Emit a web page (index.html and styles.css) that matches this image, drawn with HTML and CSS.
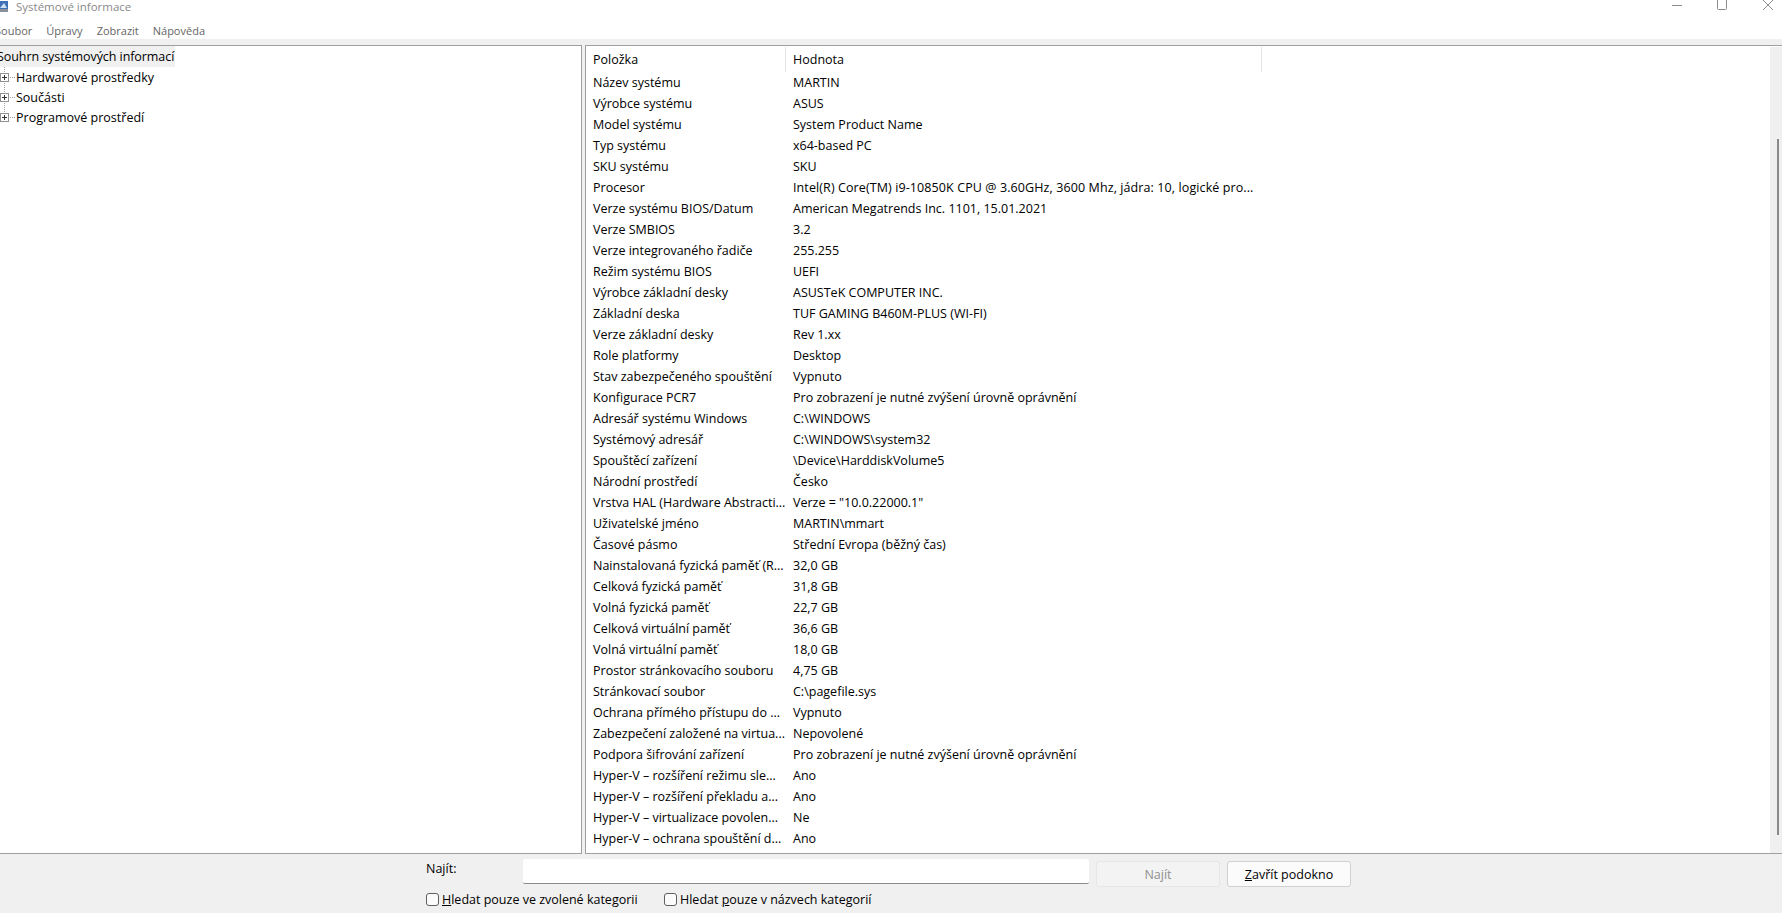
FILE: index.html
```html
<!DOCTYPE html>
<html lang="cs">
<head>
<meta charset="utf-8">
<title>Systémové informace</title>
<link rel="stylesheet" href="styles.css">
</head>
<body>

<!-- Title bar -->
<div class="titlebar">
  <svg class="appicon" width="10" height="12" viewBox="0 0 10 12">
    <rect x="0" y="0" width="9" height="8" fill="#3f6fb5"/>
    <path d="M1 7 L5 2 L8 7 Z" fill="#cfe0f5"/>
    <rect x="0" y="8" width="9" height="3" fill="#8a8f99"/>
  </svg>
  <span class="apptitle">Systémové informace</span>
  <div class="wincontrols">
    <svg class="wc-min" width="10" height="10" viewBox="0 0 10 10"><path d="M0 5.5 H10" stroke="#8c8c8c" fill="none"/></svg>
    <svg class="wc-max" width="10" height="10" viewBox="0 0 10 10"><path d="M1.5 -2 H8.5 Q9.5 -2 9.5 -1 V8.5 Q9.5 9.5 8.5 9.5 H1.5 Q0.5 9.5 0.5 8.5 V-1 Q0.5 -2 1.5 -2 Z" stroke="#8c8c8c" fill="none"/></svg>
    <svg class="wc-close" width="10" height="10" viewBox="0 0 10 10"><path d="M0 0 L10 10 M10 0 L0 10" stroke="#8c8c8c" fill="none"/></svg>
  </div>
</div>

<!-- Menu -->
<div class="menubar">
  <span class="menu-first">Soubor</span>
  <span>Úpravy</span>
  <span>Zobrazit</span>
  <span>Nápověda</span>
</div>

<div class="strip"></div>

<!-- Tree and list -->
<div class="panes">
  <div class="tree">
    <div class="tree-sel">Souhrn systémových informací</div>
    <div class="tree-rows">
      <div class="tree-row"><span class="plus"></span><span class="dots"></span>Hardwarové prostředky</div>
      <div class="tree-row"><span class="plus"></span><span class="dots"></span>Součásti</div>
      <div class="tree-row"><span class="plus"></span><span class="dots"></span>Programové prostředí</div>
    </div>
  </div>

  <div class="list">
    <div class="list-main">
      <div class="list-head">
        <div class="hcell hcell1">Položka</div>
        <div class="hcell hcell2">Hodnota</div>
      </div>
      <div class="row"><span>Název systému</span><span>MARTIN</span></div>
      <div class="row"><span>Výrobce systému</span><span>ASUS</span></div>
      <div class="row"><span>Model systému</span><span>System Product Name</span></div>
      <div class="row"><span>Typ systému</span><span>x64-based PC</span></div>
      <div class="row"><span>SKU systému</span><span>SKU</span></div>
      <div class="row"><span>Procesor</span><span class="val-long">Intel(R) Core(TM) i9-10850K CPU @ 3.60GHz, 3600 Mhz, jádra: 10, logické pro...</span></div>
      <div class="row"><span>Verze systému BIOS/Datum</span><span>American Megatrends Inc. 1101, 15.01.2021</span></div>
      <div class="row"><span>Verze SMBIOS</span><span>3.2</span></div>
      <div class="row"><span>Verze integrovaného řadiče</span><span>255.255</span></div>
      <div class="row"><span>Režim systému BIOS</span><span>UEFI</span></div>
      <div class="row"><span>Výrobce základní desky</span><span>ASUSTeK COMPUTER INC.</span></div>
      <div class="row"><span>Základní deska</span><span>TUF GAMING B460M-PLUS (WI-FI)</span></div>
      <div class="row"><span>Verze základní desky</span><span>Rev 1.xx</span></div>
      <div class="row"><span>Role platformy</span><span>Desktop</span></div>
      <div class="row"><span>Stav zabezpečeného spouštění</span><span>Vypnuto</span></div>
      <div class="row"><span>Konfigurace PCR7</span><span>Pro zobrazení je nutné zvýšení úrovně oprávnění</span></div>
      <div class="row"><span>Adresář systému Windows</span><span>C:\WINDOWS</span></div>
      <div class="row"><span>Systémový adresář</span><span>C:\WINDOWS\system32</span></div>
      <div class="row"><span>Spouštěcí zařízení</span><span>\Device\HarddiskVolume5</span></div>
      <div class="row"><span>Národní prostředí</span><span>Česko</span></div>
      <div class="row"><span>Vrstva HAL (Hardware Abstracti...</span><span>Verze = "10.0.22000.1"</span></div>
      <div class="row"><span>Uživatelské jméno</span><span>MARTIN\mmart</span></div>
      <div class="row"><span>Časové pásmo</span><span>Střední Evropa (běžný čas)</span></div>
      <div class="row"><span>Nainstalovaná fyzická paměť (R...</span><span>32,0 GB</span></div>
      <div class="row"><span>Celková fyzická paměť</span><span>31,8 GB</span></div>
      <div class="row"><span>Volná fyzická paměť</span><span>22,7 GB</span></div>
      <div class="row"><span>Celková virtuální paměť</span><span>36,6 GB</span></div>
      <div class="row"><span>Volná virtuální paměť</span><span>18,0 GB</span></div>
      <div class="row"><span>Prostor stránkovacího souboru</span><span>4,75 GB</span></div>
      <div class="row"><span>Stránkovací soubor</span><span>C:\pagefile.sys</span></div>
      <div class="row"><span>Ochrana přímého přístupu do ...</span><span>Vypnuto</span></div>
      <div class="row"><span>Zabezpečení založené na virtua...</span><span>Nepovolené</span></div>
      <div class="row"><span>Podpora šifrování zařízení</span><span>Pro zobrazení je nutné zvýšení úrovně oprávnění</span></div>
      <div class="row"><span>Hyper-V – rozšíření režimu sle...</span><span>Ano</span></div>
      <div class="row"><span>Hyper-V – rozšíření překladu a...</span><span>Ano</span></div>
      <div class="row"><span>Hyper-V – virtualizace povolen...</span><span>Ne</span></div>
      <div class="row"><span>Hyper-V – ochrana spouštění d...</span><span>Ano</span></div>
    </div>
    <div class="scrollbar"><div class="thumb"></div></div>
  </div>
</div>

<!-- Find panel -->
<div class="findpanel">
  <div class="findrow">
    <label class="findlabel">Na<u>j</u>ít:</label>
    <input class="findinput" type="text">
    <button class="btn btn-off" disabled>Na<u>j</u>ít</button>
    <button class="btn"><u>Z</u>avřít podokno</button>
  </div>
  <div class="checkrow">
    <label class="check check1"><span class="box"></span><span><u>H</u>ledat pouze ve zvolené kategorii</span></label>
    <label class="check"><span class="box"></span><span>Hledat <u>p</u>ouze v názvech kategorií</span></label>
  </div>
</div>

</body>
</html>
```

FILE: styles.css
```css
html, body {
  margin: 0;
  height: 100%;
}

body {
  width: 1782px;
  height: 913px;
  overflow: hidden;
  background: #fff;
  color: #000;
  font-family: "Open Sans", "Noto Sans", sans-serif;
  font-size: 12.5px;
  display: flex;
  flex-direction: column;
}

/* Title bar */
.titlebar {
  height: 13px;
  display: flex;
  align-items: center;
  flex: none;
}

.appicon {
  margin-left: -1px;
  flex: none;
}

.apptitle {
  margin-left: 7px;
  color: #8a8a8a;
  font-size: 11.5px;
}

.wincontrols {
  margin-left: auto;
  display: flex;
  margin-right: 9px;
  gap: 35px;
  align-self: flex-start;
}

.wc-max {
  margin-right: 1px;
}

/* Menu */
.menubar {
  height: 26px;
  padding-top: 9px;
  box-sizing: border-box;
  display: flex;
  align-items: center;
  gap: 14px;
  color: #666;
  font-size: 11px;
  flex: none;
}

.menu-first {
  margin-left: -5px;
}

.strip {
  height: 6px;
  background: #f0f0f0;
  flex: none;
}

/* Panes */
.panes {
  height: 809px;
  display: flex;
  gap: 3px;
  background: #f0f0f0;
  flex: none;
}

.tree {
  width: 582px;
  flex: none;
  background: #fff;
  border-top: 1px solid #a0a0a0;
  border-right: 1px solid #a0a0a0;
  border-bottom: 1px solid #a0a0a0;
  box-sizing: border-box;
}

.tree-sel {
  width: 175px;
  height: 21px;
  line-height: 22px;
  background: #f0f0f0;
  text-indent: -3px;
  white-space: nowrap;
  letter-spacing: -0.07px;
}

/* dotted line that joins the tree nodes */
.tree-rows {
  background: repeating-linear-gradient(#a0a0a0 0 1px, transparent 1px 2px) 4px 0 / 1px 50px no-repeat;
}

.tree-row {
  height: 20px;
  padding-top: 1px;
  box-sizing: border-box;
  display: flex;
  align-items: center;
  white-space: nowrap;
}

.plus {
  width: 7px;
  height: 7px;
  border: 1px solid #919191;
  flex: none;
  background:
    linear-gradient(#333, #333) center / 5px 1px no-repeat,
    linear-gradient(#333, #333) center / 1px 5px no-repeat,
    #fff;
}

.dots {
  width: 5px;
  height: 0;
  border-top: 1px dotted #a0a0a0;
  margin: 0 1px;
  flex: none;
}

.list {
  flex: 1;
  display: flex;
  background: #fff;
  border: 1px solid #a0a0a0;
  border-right: 0;
  box-sizing: border-box;
}

.list-main {
  flex: 1;
}

.list-head {
  height: 25px;
  display: flex;
  margin-top: 1px;
}

.hcell {
  line-height: 25px;
  box-sizing: border-box;
  border-right: 1px solid #e5e5e5;
  padding-left: 7px;
}

.hcell1 {
  width: 200px;
}

.hcell2 {
  width: 476px;
}

.row {
  height: 21px;
  line-height: 21px;
  display: flex;
  white-space: nowrap;
}

.row span:first-child {
  width: 207px;
  padding-left: 7px;
  box-sizing: border-box;
}

.val-long {
  letter-spacing: 0.1px;
}

.scrollbar {
  width: 12px;
  flex: none;
  margin-top: 1px;
  background: #f0f0f0;
  position: relative;
}

.thumb {
  position: absolute;
  left: 7px;
  width: 2px;
  top: 92px;
  height: 696px;
  background: #8a8a8a;
}

/* Find panel */
.findpanel {
  flex: 1;
  background: #f0f0f0;
  padding-left: 426px;
}

.findrow {
  display: flex;
  height: 34px;
  padding-top: 5px;
  box-sizing: border-box;
}

.findlabel {
  width: 97px;
  line-height: 18px;
  margin-top: 1px;
}

.findinput {
  width: 566px;
  height: 25px;
  box-sizing: border-box;
  border: 0;
  border-bottom: 1px solid #8a8a8a;
  background: #fff;
  border-radius: 2px;
  padding: 0;
  margin: 0 7px 0 0;
}

.btn {
  width: 124px;
  height: 26px;
  margin: 2px 7px 0 0;
  padding: 0;
  font: inherit;
  color: #000;
  background: #fbfbfb;
  border: 1px solid #d0d0d0;
  border-radius: 3px;
}

.btn-off {
  color: #8f8f8f;
  background: #f3f3f3;
  border-color: #e6e6e6;
}

.checkrow {
  display: flex;
  margin-top: 1px;
}

.check {
  display: flex;
  align-items: center;
  height: 20px;
  white-space: nowrap;
}

.check1 {
  width: 238px;
}

.box {
  width: 13px;
  height: 13px;
  box-sizing: border-box;
  border: 1px solid #5f5f5f;
  border-radius: 3px;
  background: #fbfbfb;
  margin-right: 3px;
}
```
